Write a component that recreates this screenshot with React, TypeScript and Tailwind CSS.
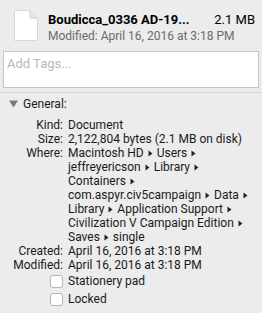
import React from "react";

const Arrow = () => (
  <svg width="5" height="7" viewBox="0 0 5 7" className="inline-block mx-[4px] align-[0px]">
    <path d="M0.5 0.5 L4.5 3.5 L0.5 6.5 Z" fill="#222" />
  </svg>
);

const Row = ({ label, children }: { label: string; children: React.ReactNode }) => (
  <div className="flex h-[14px] items-center">
    <div className="w-[64px] text-right pr-[1px] shrink-0">{label}</div>
    <div className="pl-[4px] whitespace-nowrap">{children}</div>
  </div>
);

const Cont = ({ children }: { children: React.ReactNode }) => (
  <div className="flex h-[14px] items-center">
    <div className="w-[64px] shrink-0" />
    <div className="pl-[4px] whitespace-nowrap">{children}</div>
  </div>
);

const Check = ({ label }: { label: string }) => (
  <div className="flex items-center h-[18px]">
    <div className="w-[50px] shrink-0" />
    <div className="w-[13px] h-[13px] rounded-[3px] border border-[#b5b5b5] bg-white shrink-0" />
    <div className="pl-[5px]">{label}</div>
  </div>
);

export default function App() {
  return (
    <div
      className="w-[262px] h-[313px] bg-[#ececec] text-[#1a1a1a] overflow-hidden"
      style={{ fontFamily: "Roboto, 'Liberation Sans', sans-serif", fontSize: "12px" }}
    >
      <div className="flex pt-[10px] pl-[14px] pr-[7px] h-[51px]">
        <svg width="24" height="31" viewBox="0 0 24 31" className="shrink-0">
          <path d="M0.5 0.5 H16 L23.5 8 V30.5 H0.5 Z" fill="#fff" stroke="#d9d9d9" />
          <path d="M16 0.5 V8 H23.5" fill="#e6e6e6" stroke="#cfcfcf" />
        </svg>
        <div className="flex-1 pl-[10px]">
          <div className="flex justify-between items-center h-[15px] mt-[2px]">
            <span className="font-bold text-[13px] text-black">Boudicca_0336 AD-19...</span>
            <span className="text-[13px] text-black">2.1 MB</span>
          </div>
          <div className="h-[14px] mt-[2px] flex items-center text-[#6b6b6b]">Modified: April 16, 2016 at 3:18 PM</div>
        </div>
      </div>
      <div className="mx-[3px] h-[37px] border border-[#c4c4c4] bg-white px-[3px] pt-[2px]">
        <span className="text-[13px] text-[#b8b8b8]">Add Tags...</span>
      </div>
      <div className="mt-[4px] h-px bg-[#d4d4d4]" />
      <div className="flex items-center h-[17px] mt-[2px] pl-[9px]">
        <svg width="9" height="8" viewBox="0 0 9 8">
          <path d="M0 0.5 H9 L4.5 7.5 Z" fill="#7a7a7a" />
        </svg>
        <span className="pl-[5px]">General:</span>
      </div>
      <div className="mt-[6px]">
        <Row label="Kind:">Document</Row>
        <Row label="Size:">2,122,804 bytes (2.1 MB on disk)</Row>
        <Row label="Where:">
          Macintosh HD<Arrow />Users<Arrow />
        </Row>
        <Cont>
          jeffreyericson<Arrow />Library<Arrow />
        </Cont>
        <Cont>
          Containers<Arrow />
        </Cont>
        <Cont>
          com.aspyr.civ5campaign<Arrow />Data<Arrow />
        </Cont>
        <Cont>
          Library<Arrow />Application Support<Arrow />
        </Cont>
        <Cont>
          Civilization V Campaign Edition<Arrow />
        </Cont>
        <Cont>
          Saves<Arrow />single
        </Cont>
        <Row label="Created:">April 16, 2016 at 3:18 PM</Row>
        <Row label="Modified:">April 16, 2016 at 3:18 PM</Row>
        <Check label="Stationery pad" />
        <Check label="Locked" />
      </div>
    </div>
  );
}
